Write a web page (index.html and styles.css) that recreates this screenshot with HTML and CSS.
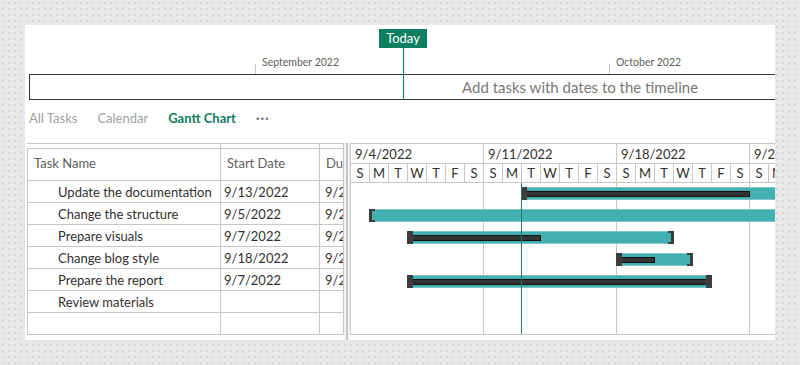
FILE: index.html
```html
<!DOCTYPE html>
<html lang="en">
<head>
<meta charset="UTF-8">
<meta name="viewport" content="width=device-width, initial-scale=1.0">
<title>Gantt Chart</title>
<link rel="stylesheet" href="styles.css">
</head>
<body>
<div class="panel">

    <!-- timeline strip -->
    <div class="timeline">
        <div class="month" style="left: 230px;">September 2022</div>
        <div class="month" style="left: 584px;">October 2022</div>
        <div class="today">
            <span class="today-badge">Today</span>
            <span class="today-line"></span>
        </div>
        <div class="timeline-box">Add tasks with dates to the timeline</div>
    </div>

    <nav class="tabs">
        <span class="tab">All Tasks</span>
        <span class="tab">Calendar</span>
        <span class="tab active">Gantt Chart</span>
        <span class="tab more">&middot;&middot;&middot;</span>
    </nav>

    <div class="workspace">
        <!-- task grid -->
        <div class="grid">
            <div class="row strip"><div class="cell"></div><div class="cell"></div><div class="cell"></div></div>
            <div class="row head"><div class="cell">Task Name</div><div class="cell">Start Date</div><div class="cell">Du</div></div>
            <div class="row"><div class="cell name">Update the documentation</div><div class="cell">9/13/2022</div><div class="cell">9/2</div></div>
            <div class="row"><div class="cell name">Change the structure</div><div class="cell">9/5/2022</div><div class="cell">9/2</div></div>
            <div class="row"><div class="cell name">Prepare visuals</div><div class="cell">9/7/2022</div><div class="cell">9/2</div></div>
            <div class="row"><div class="cell name">Change blog style</div><div class="cell">9/18/2022</div><div class="cell">9/2</div></div>
            <div class="row"><div class="cell name">Prepare the report</div><div class="cell">9/7/2022</div><div class="cell">9/2</div></div>
            <div class="row"><div class="cell name">Review materials</div><div class="cell"></div><div class="cell"></div></div>
            <div class="row"><div class="cell name"></div><div class="cell"></div><div class="cell"></div></div>
        </div>

        <div class="splitter"></div>

        <!-- chart -->
        <div class="gantt">
            <div class="weeks">
                <div class="week">9/4/2022</div>
                <div class="week">9/11/2022</div>
                <div class="week">9/18/2022</div>
                <div class="week">9/25/2022</div>
            </div>
            <div class="days" id="days"></div>
            <div class="chart">
                <span class="week-line" style="left: 132px;"></span>
                <span class="week-line" style="left: 265px;"></span>
                <span class="week-line" style="left: 398px;"></span>
                <span class="now-line" style="left: 170px;"></span>

                <div class="bar-row">
                    <div class="bar" style="left: 170px; width: 500px;">
                        <span class="progress" style="width: 228px;"></span>
                        <span class="handle"></span>
                    </div>
                </div>
                <div class="bar-row">
                    <div class="bar" style="left: 18px; width: 500px;">
                        <span class="bracket"></span>
                    </div>
                </div>
                <div class="bar-row">
                    <div class="bar" style="left: 56px; width: 267px;">
                        <span class="progress" style="width: 133px;"></span>
                        <span class="handle"></span>
                        <span class="bracket end"></span>
                    </div>
                </div>
                <div class="bar-row">
                    <div class="bar" style="left: 265px; width: 77px;">
                        <span class="progress" style="width: 38px;"></span>
                        <span class="handle"></span>
                        <span class="bracket end"></span>
                    </div>
                </div>
                <div class="bar-row">
                    <div class="bar" style="left: 56px; width: 305px;">
                        <span class="progress" style="width: 303px;"></span>
                        <span class="handle"></span>
                        <span class="handle end"></span>
                    </div>
                </div>
                <div class="bar-row"></div>
            </div>
        </div>
    </div>
</div>

<script>
    // day letters for four weeks
    const days = document.getElementById('days');
    for (let w = 0; w < 4; w++) {
        ['S', 'M', 'T', 'W', 'T', 'F', 'S'].forEach(d => {
            const cell = document.createElement('div');
            cell.className = 'day';
            cell.textContent = d;
            days.appendChild(cell);
        });
    }
</script>
</body>
</html>
```

FILE: styles.css
```css
body {
    margin: 0;
    padding: 0;
    font-family: Lato, "Open Sans", sans-serif;
    color: #323130;
    background-color: #e8e8ea;
    background-image: radial-gradient(#d6d6da 0.7px, transparent 1px);
    background-size: 6px 6px;
    height: 365px;
}

.panel {
    margin: 25px 0 0 25px;
    width: 750px;
    height: 315px;
    background-color: #fff;
    overflow: hidden;
}

/* timeline */
.timeline {
    position: relative;
    height: 75px;
    display: flex;
    flex-direction: column;
    justify-content: flex-end;
}

.month {
    position: absolute;
    top: 30px;
    padding-left: 7px;
    height: 19px;
    font-size: 10.5px;
    line-height: 14px;
    color: #605e5c;
}

.month::before {
    content: "";
    position: absolute;
    left: 0;
    bottom: 0;
    height: 10px;
    border-left: 1px solid #c8c6c4;
}

.today {
    position: absolute;
    left: 354px;
    top: 4px;
    width: 48px;
    height: 71px;
    display: flex;
    flex-direction: column;
    align-items: center;
    z-index: 1;
}

.today-badge {
    width: 48px;
    height: 19px;
    background-color: #0f7f62;
    color: #fff;
    font-size: 13px;
    line-height: 19px;
    text-align: center;
}

.today-line {
    flex: 1;
    width: 1px;
    background-color: #0f7f62;
}

.timeline-box {
    margin-left: 4px;
    width: 760px;
    height: 26px;
    box-sizing: border-box;
    border: 1px solid #323130;
    padding-left: 432px;
    font-size: 15px;
    line-height: 24px;
    color: #7a7876;
}

/* tabs */
.tabs {
    height: 43px;
    box-sizing: border-box;
    padding: 0 0 7px 4px;
    display: flex;
    align-items: center;
    gap: 20px;
    font-size: 13px;
}

.tab {
    color: #a19f9d;
}

.tab.active {
    color: #107c5e;
    font-weight: bold;
}

.tab.more {
    color: #797775;
    font-weight: bold;
    letter-spacing: 1px;
}

/* grid + chart */
.workspace {
    height: 197px;
    display: flex;
    align-items: flex-start;
}

.grid {
    margin-left: 2px;
    width: 317px;
    box-sizing: border-box;
    border-top: 1px solid #c8c6c4;
    border-right: 1px solid #c8c6c4;
    font-size: 13px;
}

.row {
    display: grid;
    grid-template-columns: 193px 99px 1fr;
    height: 22px;
    box-sizing: border-box;
    border-bottom: 1px solid #c8c6c4;
}

.row.strip {
    height: 5px;
}

.row.head {
    height: 32px;
    color: #605e5c;
}

.cell {
    border-left: 1px solid #c8c6c4;
    padding-left: 3px;
    white-space: nowrap;
    overflow: hidden;
    display: flex;
    align-items: center;
}

.row.strip .cell:first-child {
    border-left-color: transparent;
}

.row.head .cell {
    padding-bottom: 4px;
    padding-left: 6px;
}

.cell:nth-child(3) {
    padding-left: 5px;
}

.cell.name {
    padding-left: 30px;
}

.splitter {
    width: 6px;
    height: 197px;
    background: linear-gradient(to right, #f3f2f1 2px, #c8c6c4 2px, #c8c6c4 4px, #f3f2f1 4px);
}

.gantt {
    flex: 1;
    min-width: 0;
    height: 192px;
    box-sizing: border-box;
    border-top: 1px solid #c8c6c4;
    border-left: 1px solid #c8c6c4;
    border-bottom: 1px solid #c8c6c4;
    overflow: hidden;
    font-size: 13px;
}

.weeks,
.days {
    display: flex;
    border-bottom: 1px solid #c8c6c4;
}

.weeks {
    height: 19px;
}

.days {
    height: 18px;
}

.week {
    flex-shrink: 0;
    width: 133px;
    box-sizing: border-box;
    border-right: 1px solid #c8c6c4;
    padding-left: 4px;
    line-height: 20px;
}

.day {
    flex-shrink: 0;
    width: 19px;
    box-sizing: border-box;
    border-right: 1px solid #c8c6c4;
    text-align: center;
    line-height: 18px;
}

.chart {
    position: relative;
    height: 153px;
}

.week-line,
.now-line {
    position: absolute;
    top: 0;
    bottom: 0;
    width: 1px;
    background-color: #c8c6c4;
}

.now-line {
    background-color: #1c7c63;
    z-index: 2;
}

.bar-row {
    position: relative;
    height: 22px;
}

.bar {
    position: absolute;
    top: 4px;
    height: 13px;
    box-sizing: border-box;
    background-color: #43afb0;
    border: 1px solid #7ec8c8;
    z-index: 1;
}

.progress {
    position: absolute;
    left: 0;
    top: 3px;
    height: 6px;
    box-sizing: border-box;
    background-color: #333;
    border: 1px solid #111;
}

.handle {
    position: absolute;
    left: -1px;
    top: -1px;
    width: 6px;
    height: 13px;
    background-color: #3d3d3d;
}

.handle.end {
    left: auto;
    right: -1px;
}

.bracket {
    position: absolute;
    left: -1px;
    top: -1px;
    width: 6px;
    height: 13px;
    box-sizing: border-box;
    border: 2px solid #3d3d3d;
    border-left-width: 3px;
    border-right: none;
}

.bracket.end {
    left: auto;
    right: -1px;
    border-left: none;
    border-right: 3px solid #3d3d3d;
}
```
